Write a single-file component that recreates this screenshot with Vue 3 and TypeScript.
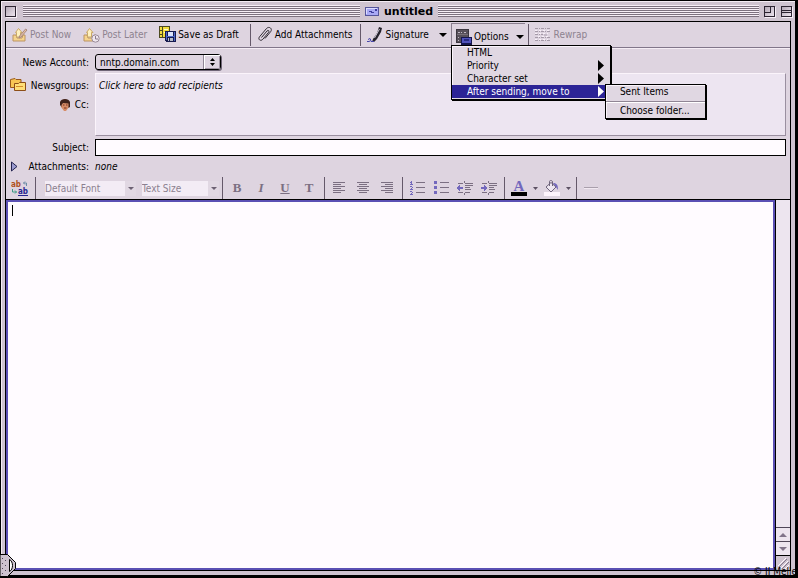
<script setup lang="ts">
import { ref } from 'vue'

interface MenuEntry {
  label: string
  submenu: boolean
  active: boolean
}

const optionsMenu: MenuEntry[] = [
  { label: 'HTML', submenu: false, active: false },
  { label: 'Priority', submenu: true, active: false },
  { label: 'Character set', submenu: true, active: false },
  { label: 'After sending, move to', submenu: true, active: true },
]

const alignments = [
  { name: 'Align left', x: [0, 0, 0, 0, 0, 0] },
  { name: 'Align center', x: [0, 2, 0, 2, 0, 2] },
  { name: 'Align right', x: [0, 4, 0, 4, 0, 4] },
]

const account = ref('nntp.domain.com')
const recipients = ref('')
const subject = ref('')
const body = ref('')
</script>

<template>
  <main class="window">
    <header class="titlebar">
      <button class="box" aria-label="Close"></button>
      <span class="stripes"></span>
      <h1 class="title">
        <svg width="14" height="9" viewBox="0 0 14 9" shape-rendering="crispEdges">
          <rect width="14" height="9" fill="#55559a" />
          <rect x="1" y="1" width="12" height="7" fill="#a9a9f4" />
          <path d="M1 1h11v1H2v5H1z" fill="#dcdcff" />
          <path d="M4 4h3v1h2v1H6V5H4zM10 2h2v2h-2z" fill="#3d3d9c" />
        </svg>
        untitled
      </h1>
      <span class="stripes"></span>
      <button class="box zoom" aria-label="Zoom"></button>
      <button class="box shade" aria-label="Collapse"></button>
    </header>

    <div class="frame">
      <nav class="toolbar">
        <button class="tool first" disabled>
          <svg width="16" height="16" viewBox="0 0 16 16">
            <path d="M1 8h3l1 3h5l1-3h2v6H1z" fill="#f6d48c" stroke="#bc9464" />
            <path d="M3.500 5.500 6.500 1.500 10 5.500H8.500V10h-4V5.500z" fill="#fff1be" stroke="#c9a866" />
            <path d="m15 3-6 7-2 1 .6-2 6-7z" fill="#e6c0a2" stroke="#a98a80" />
          </svg>
          Post Now
        </button>
        <button class="tool" disabled>
          <svg width="17" height="16" viewBox="0 0 17 16">
            <path d="M1 8h3l1 3h5l1-3h2v6H1z" fill="#f6d48c" stroke="#bc9464" />
            <path d="M3.500 5.500 6.500 1.500 10 5.500H8.500V10h-4V5.500z" fill="#fff1be" stroke="#c9a866" />
            <circle cx="12.500" cy="11.500" r="3.700" fill="#efe7ef" stroke="#9a8b9a" />
            <path d="M12.500 9v3H15" fill="none" stroke="#8b7b8b" />
          </svg>
          Post Later
        </button>
        <button class="tool">
          <svg width="17" height="17" viewBox="0 0 17 17" shape-rendering="crispEdges">
            <path d="M0 0h11v12H0z" fill="#4d4a21" />
            <path d="M1 1h2v3H1zM1 5h2v3H1zM1 9h2v2H1zM4 1h6v10H4z" fill="#f2dc3c" />
            <path d="M5 3h4v1H5zM5 6h4v1H5z" fill="#fffbd0" />
            <path d="M6 5h11v11H7l-1-1z" fill="#171b4f" />
            <path d="M7 6h1v8H7zM15 6h1v9h-1zM8 10h7v1H8z" fill="#4c68c8" />
            <path d="M9 6h5v4H9z" fill="#dce4fb" />
            <path d="M9 12h5v3H9z" fill="#b8bcc8" />
            <path d="M10 12h1v3h-1z" fill="#20244a" />
          </svg>
          Save as Draft
        </button>
        <i class="rule"></i>
        <button class="tool attach">
          <svg width="16" height="17" viewBox="0 0 16 17">
            <path d="M4.500 11.500 10 5c1.200-1.300 2.700-.2 1.600 1.300l-5.800 7c-2 2.300-5.300.2-3.300-2.500l7-8.300c2.600-2.700 6.300.1 4.200 3.100L8 12.500" fill="none" stroke="#2e2931" />
          </svg>
          Add Attachments
        </button>
        <i class="rule"></i>
        <button class="tool signature">
          <svg width="16" height="17" viewBox="0 0 16 17">
            <path d="m12 1 3 1-1 4-4 7-3 3H5l1-3 4-6z" fill="#25222b" />
            <path d="m12.500 3-5 9" stroke="#c9c4d2" />
            <path d="M0 15.500h2M1 13.500l2-1 1 2-2 1M4 15.500h3" fill="none" stroke="#4646aa" />
          </svg>
          Signature
          <svg class="caret" width="8" height="4" viewBox="0 0 8 4"><path d="M0 0h8L4 4z" /></svg>
        </button>
        <div class="options">
          <button class="tool pressed" aria-haspopup="true" aria-expanded="true">
            <svg width="16" height="16" viewBox="0 0 16 16" shape-rendering="crispEdges">
              <path d="M0 0h13v14H0z" fill="#3c3740" />
              <path d="M1 1h11v12H1z" fill="#575059" />
              <path d="M1 5h11v1H1z" fill="#777078" />
              <path d="M2 3h2v1H2zM5 3h1v1H5zM8 3h2v1H8zM2 8h1v1H2zM2 11h1v1H2z" fill="#c1b9c4" />
              <path d="M5 8h11v8H5z" fill="#15174e" />
              <path d="M6 9h9v5H6z" fill="#5052bb" />
              <path d="M8 10h5v2H8z" fill="#272b83" />
            </svg>
            Options
            <svg class="caret" width="8" height="4" viewBox="0 0 8 4"><path d="M0 0h8L4 4z" /></svg>
          </button>
          <div class="menu" role="menu">
            <button
              v-for="entry in optionsMenu"
              :key="entry.label"
              class="entry"
              :class="{ active: entry.active }"
              role="menuitem"
            >
              {{ entry.label }}
              <svg v-if="entry.submenu" width="6" height="11" viewBox="0 0 6 11"><path d="M0 0l6 5.500L0 11z" fill="currentColor" /></svg>
            </button>
            <div class="menu submenu" role="menu">
              <button class="entry" role="menuitem">Sent Items</button>
              <hr />
              <button class="entry" role="menuitem">Choose folder...</button>
            </div>
          </div>
        </div>
        <i class="rule"></i>
        <button class="tool rewrap" disabled>
          <svg width="15" height="14" viewBox="0 0 15 14" shape-rendering="crispEdges">
            <path d="M0 .5h15M0 3.500h15M0 6.500h8M0 9.500h15M0 12.500h15" fill="none" stroke="#a59aa8" stroke-dasharray="3 1 1 1" />
            <path d="M0 2h15M0 5h13M3 8h10M0 11h13" fill="none" stroke="#f8f0f8" stroke-dasharray="2 2" />
            <path d="M9 6h3v2H9z" fill="#c3b8c6" />
          </svg>
          Rewrap
        </button>
      </nav>

      <section class="headers">
        <label class="name" for="account">News Account:</label>
        <div class="popup account">
          <select id="account" v-model="account">
            <option>nntp.domain.com</option>
          </select>
          <span class="arrows">
            <svg width="5" height="8" viewBox="0 0 5 8"><path d="M0 3l2.500-3L5 3zM0 5h5L2.500 8z" /></svg>
          </span>
        </div>

        <div class="names">
          <label class="name" for="recipients">
            <svg width="16" height="14" viewBox="0 0 16 14">
              <path d="M.5 1.500 5 .5l1 1h5v8H.5z" fill="#f8c654" stroke="#9b5b1c" />
              <path d="M4.500 5.500h4l1-1h6v8h-11z" fill="#ffdf77" stroke="#8c4e18" />
              <path d="M6 8.500h7" stroke="#d58e2c" />
            </svg>
            Newsgroups:
          </label>
          <label class="name" for="recipients">
            <svg width="10" height="12" viewBox="0 0 10 12">
              <path d="M1 4c0-5 8-5 8 0v4l-3 4H4L1 8z" fill="#d78d68" />
              <path d="M0 6V3C1-1 9-1 10 3v5L8.500 9V4.500L3 4 1.500 6v2z" fill="#40221c" />
              <path d="M3 6h1.500M6 6h1.500M4 9h2.500" stroke="#7b3120" />
            </svg>
            Cc:
          </label>
        </div>
        <textarea id="recipients" v-model="recipients" class="recipients" placeholder="Click here to add recipients"></textarea>

        <label class="name" for="subject">Subject:</label>
        <input id="subject" v-model="subject" class="subject" type="text" />
      </section>

      <div class="attachments">
        <button class="disclose" aria-label="Show attachments">
          <svg width="7" height="11" viewBox="0 0 7 11"><path d="M.5 1v9L6 5.500z" fill="#9b9bd0" stroke="#23234f" /></svg>
        </button>
        <span class="name">Attachments:</span>
        <em>none</em>
      </div>

      <div class="format">
        <button class="swap" aria-label="Replace text">
          <svg width="18" height="16" viewBox="0 0 18 16">
            <text class="ab" x="0" y="7" fill="#b0521c">ab</text>
            <text class="ab" x="7" y="14" fill="#25258f">ab</text>
            <path d="M7 15.500h10" stroke="#25258f" />
            <path d="M15.500 6V3h-3M14 1.500 12.500 3 14 4.500" fill="none" stroke="#6c8ca6" />
            <path d="M1.500 9v3h4M4 10.500 5.500 12 4 13.500" fill="none" stroke="#3d9a84" />
          </svg>
        </button>
        <i class="rule"></i>
        <div class="popup pale face-name">
          <select aria-label="Font" disabled><option>Default Font</option></select>
          <span class="arrows"><svg width="6" height="3" viewBox="0 0 6 3"><path d="M0 0h6L3 3z" /></svg></span>
        </div>
        <div class="popup pale size-name">
          <select aria-label="Text size" disabled><option>Text Size</option></select>
          <span class="arrows"><svg width="6" height="3" viewBox="0 0 6 3"><path d="M0 0h6L3 3z" /></svg></span>
        </div>
        <i class="rule"></i>
        <button class="glyph" disabled><b>B</b></button>
        <button class="glyph" disabled><i class="slant">I</i></button>
        <button class="glyph" disabled><u>U</u></button>
        <button class="glyph" disabled><b>T</b></button>
        <i class="rule"></i>
        <button v-for="align in alignments" :key="align.name" class="glyph" :aria-label="align.name" disabled>
          <svg width="12" height="12" viewBox="0 0 12 12" shape-rendering="crispEdges">
            <rect v-for="(x, row) in align.x" :key="row" :x="x" :y="row * 2" :width="row % 2 ? 8 : 12" height="1" fill="#7b6f82" />
          </svg>
        </button>
        <i class="rule"></i>
        <button class="glyph" aria-label="Numbered list" disabled>
          <svg width="15" height="14" viewBox="0 0 15 14" shape-rendering="crispEdges">
            <path d="M6 1h9v1H6zM6 6h9v1H6zM6 11h9v1H6z" fill="#7b6f82" />
            <path d="M1 0h1v4H1zM0 1h1v1H0zM0 3h3v1H0zM0 5h2v1H0zM2 6h1v1H2zM1 7h1v1H1zM0 8h3v1H0zM0 10h2v1H0zM2 11h1v1H2zM1 12h1v1H1zM2 13h1v1H0v-1z" fill="#7368bd" />
          </svg>
        </button>
        <button class="glyph" aria-label="Bulleted list" disabled>
          <svg width="15" height="14" viewBox="0 0 15 14" shape-rendering="crispEdges">
            <path d="M6 1h9v1H6zM6 6h9v1H6zM6 11h9v1H6z" fill="#7b6f82" />
            <path d="M0 0h3v3H0zM0 5h3v3H0zM0 10h3v3H0z" fill="#7368bd" />
          </svg>
        </button>
        <button class="glyph" aria-label="Decrease indent" disabled>
          <svg width="16" height="14" viewBox="0 0 16 14" shape-rendering="crispEdges">
            <path d="M1 2h5v1H1zM8 2h8v1H8zM8 4h8v1H8zM8 6h5v1H8zM8 8h6v1H8zM1 11h5v1H1zM8 11h5v1H8zM7 0h1v2H7zM7 12h1v2H7z" fill="#7b6f82" />
            <path d="M0 6h6v2H0zM1 5h2v4H1zM2 4h1v6H2z" fill="#7368bd" />
          </svg>
        </button>
        <button class="glyph" aria-label="Increase indent" disabled>
          <svg width="16" height="14" viewBox="0 0 16 14" shape-rendering="crispEdges">
            <path d="M1 2h5v1H1zM8 2h8v1H8zM8 4h8v1H8zM8 6h5v1H8zM8 8h6v1H8zM1 11h5v1H1zM8 11h5v1H8zM7 0h1v2H7zM7 12h1v2H7z" fill="#7b6f82" />
            <path d="M0 6h6v2H0zM3 5h2v4H3zM3 4h1v6H3z" fill="#7368bd" />
          </svg>
        </button>
        <i class="rule"></i>
        <button class="glyph color" disabled>
          <span class="ink">A</span>
          <svg width="5" height="3" viewBox="0 0 5 3"><path d="M0 0h5L2.500 3z" fill="#5c5163" /></svg>
        </button>
        <button class="glyph color" aria-label="Background color" disabled>
          <svg width="16" height="16" viewBox="0 0 16 16">
            <path d="M7 2.500 12 7l-5 5-5-5z" fill="#eee7f1" stroke="#6e647b" />
            <path d="M5.500 6V1.500C5.500 0 8.500 0 8.500 2v4" fill="none" stroke="#6e647b" />
            <path d="M9 3c4 0 5 2 5 7l-2-3z" fill="#7368bd" />
            <path d="M0 12h16v4H0z" fill="#fdf4fc" />
          </svg>
          <svg width="5" height="3" viewBox="0 0 5 3"><path d="M0 0h5L2.500 3z" fill="#5c5163" /></svg>
        </button>
        <i class="rule"></i>
        <button class="glyph" aria-label="Horizontal line" disabled>
          <svg width="14" height="2" viewBox="0 0 14 2"><path d="M0 0h14v1H0z" fill="#a99fac" /><path d="M0 1h14v1H0z" fill="#f1e8f1" /></svg>
        </button>
      </div>

      <div class="compose">
        <div class="editor">
          <textarea v-model="body" aria-label="Message body"></textarea>
          <span class="insertion"></span>
        </div>
        <div class="side">
          <div class="track"></div>
          <button class="step" aria-label="Scroll up"><svg width="8" height="4" viewBox="0 0 8 4"><path d="M0 4h8L4 0z" /></svg></button>
          <button class="step" aria-label="Scroll down"><svg width="8" height="4" viewBox="0 0 8 4"><path d="M0 0h8L4 4z" /></svg></button>
          <div class="grip">
            <svg width="12" height="12" viewBox="0 0 12 12">
              <path d="M1 9 9 1M4 11l7-7M8 12l4-4" stroke="#fff8ff" />
              <path d="M2 10 10 2M5 12l7-7" stroke="#81748a" />
            </svg>
          </div>
        </div>
      </div>
    </div>

    <svg class="knob" width="16" height="24" viewBox="0 0 16 24">
      <path d="M0 .5h7.500l8 8v6l-8 8H0z" fill="#cdc2cf" stroke="#000" />
      <path d="M9.500 5.500c4 2 4 10 0 12z" fill="#fff" stroke="#000" />
      <path d="M2 4h1v1H2zM5 6h1v1H5zM2 9h1v1H2zM5 11h1v1H5zM2 14h1v1H2zM5 16h1v1H5zM2 19h1v1H2z" fill="#51465a" />
    </svg>
    <small class="credit">© JJ Melle</small>
  </main>
</template>

<style>
body {
  margin: 0;
  background: #120a1c;
}
</style>

<style scoped>
.window {
  --face: #ded4e0;
  --chrome: #cfc4d0;
  position: relative;
  display: flex;
  flex-direction: column;
  box-sizing: border-box;
  min-height: 100vh;
  padding: 0 4px 4px 4px;
  background: var(--chrome);
  border: solid #000;
  border-width: 1px 3px 3px 1px;
  box-shadow: inset 1px 1px #f4ecf4;
  color: #000;
  font: 10px/13px "DejaVu Sans Condensed", "DejaVu Sans", sans-serif;
}
button,
input,
select,
textarea {
  box-sizing: border-box;
  margin: 0;
  padding: 0;
  border: 0;
  border-radius: 0;
  background: none;
  color: inherit;
  font: inherit;
  outline: 0;
}
svg {
  display: block;
  flex: none;
}
.titlebar {
  display: flex;
  align-items: center;
  gap: 5px;
  height: 20px;
}
.stripes {
  flex: 1 1 0;
  height: 12px;
  background: repeating-linear-gradient(#f6eef6 0 1px, #7c717e 1px 2px);
}
.stripes:first-of-type {
  flex-grow: 21;
  margin-left: 2px;
}
.stripes:last-of-type {
  flex-grow: 20;
}
.title {
  display: flex;
  align-items: center;
  gap: 5px;
  margin: 0;
  font: bold 11px/13px "DejaVu Sans", sans-serif;
}
.box {
  position: relative;
  width: 11px;
  height: 11px;
  border: 1px solid #2c2431;
  background: linear-gradient(135deg, #b3a8b5, #eee5ef);
  box-shadow: 1px 1px #f6eef6;
}
.zoom {
  margin-right: 1px;
}
.shade {
  margin-right: -1px;
}
.zoom::after {
  content: "";
  position: absolute;
  top: 0;
  left: 0;
  width: 5px;
  height: 5px;
  border: solid #2c2431;
  border-width: 0 1px 1px 0;
}
.shade::after {
  content: "";
  position: absolute;
  top: 3px;
  left: 0;
  right: 0;
  height: 1px;
  border: solid #2c2431;
  border-width: 1px 0;
}
.frame {
  display: flex;
  flex: 1;
  flex-direction: column;
  border: 1px solid #000;
  background: var(--face);
}
.toolbar {
  display: flex;
  align-items: center;
  height: 25px;
  border-bottom: 1px solid #81768a;
  box-shadow: 0 1px #f5edf5;
}
.tool {
  display: flex;
  align-items: center;
  gap: 2px;
  height: 23px;
  padding: 0 8px 0 4px;
  white-space: nowrap;
}
.tool:disabled {
  color: #8d828f;
}
.tool.first {
  padding-left: 6px;
}
.tool.attach {
  padding-right: 5px;
}
.tool.signature {
  padding-right: 4px;
}
.rule {
  flex: none;
  width: 1px;
  height: 22px;
  margin: 0 2px 0 3px;
  background: #65596a;
}
.caret {
  margin-left: 5px;
}
.signature .caret {
  margin-left: 8px;
}
.options {
  position: relative;
}
.tool.pressed {
  padding: 3px 1px 0 4px;
  border: solid #8a7f8f;
  border-width: 1px 0 0 1px;
}
.rewrap {
  gap: 4px;
}
.menu {
  position: absolute;
  z-index: 2;
  top: 22px;
  left: 0;
  box-sizing: border-box;
  width: 160px;
  padding-bottom: 1px;
  border: 1px solid #000;
  background: #e0d7e2;
  box-shadow: inset 1px 1px #fbf4fb, 1px 1px #000;
}
.entry {
  display: flex;
  align-items: center;
  justify-content: space-between;
  width: 100%;
  height: 13px;
  padding: 0 6px 0 15px;
  white-space: nowrap;
}
.active {
  background: #2c2496;
  color: #fff;
}
.submenu {
  top: 38px;
  left: 153px;
  width: 101px;
}
.submenu .entry {
  padding: 0 0 0 14px;
}
.submenu hr {
  margin: 3px 0 2px;
  border: solid #8f8594;
  border-width: 1px 0 0;
  box-shadow: 0 1px #fff;
}
.headers {
  display: grid;
  grid-template-columns: 83px 1fr;
  column-gap: 6px;
  row-gap: 3px;
  padding: 6px 4px 0 0;
}
.name {
  display: flex;
  align-items: center;
  justify-content: flex-end;
  gap: 5px;
}
.names {
  display: flex;
  flex-direction: column;
  gap: 6px;
  padding-top: 5px;
}
.popup {
  display: flex;
  position: relative;
}
.popup select {
  flex: 1;
  appearance: none;
  padding-left: 4px;
}
.arrows {
  position: absolute;
  top: 0;
  right: 0;
  bottom: 0;
  display: grid;
  place-items: center;
  width: 16px;
  border-left: 1px solid #8f8594;
  box-shadow: inset 1px 1px #fff, inset -1px -1px #a094a3;
  pointer-events: none;
}
.account {
  width: 124px;
  height: 14px;
  border: 1px solid #000;
  border-radius: 3px;
  box-shadow: 1px 1px #6f6576;
}
.recipients {
  height: 63px;
  padding: 5px 3px;
  border: solid;
  border-width: 1px;
  border-color: #fbf4fb #9a8fa0 #9a8fa0 #fbf4fb;
  background: #ede5f1;
  resize: none;
}
.recipients::placeholder {
  color: #000;
  font-style: italic;
  opacity: 1;
}
.subject {
  height: 17px;
  padding: 0 4px;
  border: 1px solid #000;
  background: #fffbff;
}
.attachments {
  display: flex;
  align-items: center;
  gap: 6px;
  height: 21px;
}
.disclose {
  padding-left: 5px;
}
.attachments .name {
  width: 65px;
}
.format {
  display: flex;
  align-items: center;
  height: 22px;
}
.swap {
  padding-left: 5px;
}
.ab {
  font: bold 8px "DejaVu Sans Condensed", "DejaVu Sans", sans-serif;
}
.swap + .rule {
  margin: 0 9px 0 6px;
}
.pale {
  height: 15px;
  background: #f3ecf5;
  color: #8b808f;
}
.pale select {
  padding-left: 0;
  opacity: 1;
}
.pale .arrows {
  width: 11px;
  border: 0;
  background: #e1d8e3;
  fill: #6c6173;
  box-shadow: none;
}
.face-name {
  width: 91px;
  margin-right: 6px;
}
.size-name {
  width: 77px;
}
.glyph {
  display: grid;
  place-items: center;
  width: 24px;
  height: 22px;
  color: #7b6f82;
  font: bold 13px/14px "Liberation Serif", serif;
}
.slant {
  font-style: italic;
}
.color {
  grid-template-columns: 16px 5px;
  gap: 6px;
  width: 33px;
  padding-left: 4px;
}
.ink {
  width: 16px;
  height: 12px;
  border-bottom: 4px solid #000;
  color: #7368bd;
  font-size: 15px;
  line-height: 12px;
}
.compose {
  display: flex;
  flex: 1;
  border-top: 1px solid #000;
}
.editor {
  position: relative;
  display: flex;
  flex: 1;
  border: 2px solid #5b50b4;
  background: #fffbff;
}
.editor textarea {
  flex: 1;
  padding: 2px 4px;
  resize: none;
}
.insertion {
  position: absolute;
  top: 3px;
  left: 4px;
  width: 1px;
  height: 11px;
  background: #000;
}
.side {
  display: flex;
  flex-direction: column;
  width: 14px;
  border-left: 1px solid #000;
  background: #ede5ef;
}
.track {
  flex: 1;
}
.step {
  display: grid;
  place-items: center;
  height: 14px;
  border-top: 1px solid #4f4557;
  fill: #81748a;
}
.grip {
  display: grid;
  place-items: center;
  height: 14px;
  border-top: 1px solid #000;
  background: var(--chrome);
}
.knob {
  position: absolute;
  left: -1px;
  bottom: -3px;
}
.credit {
  position: absolute;
  right: -2px;
  bottom: -3px;
  font-size: 10px;
  line-height: 12px;
  white-space: nowrap;
}
</style>
